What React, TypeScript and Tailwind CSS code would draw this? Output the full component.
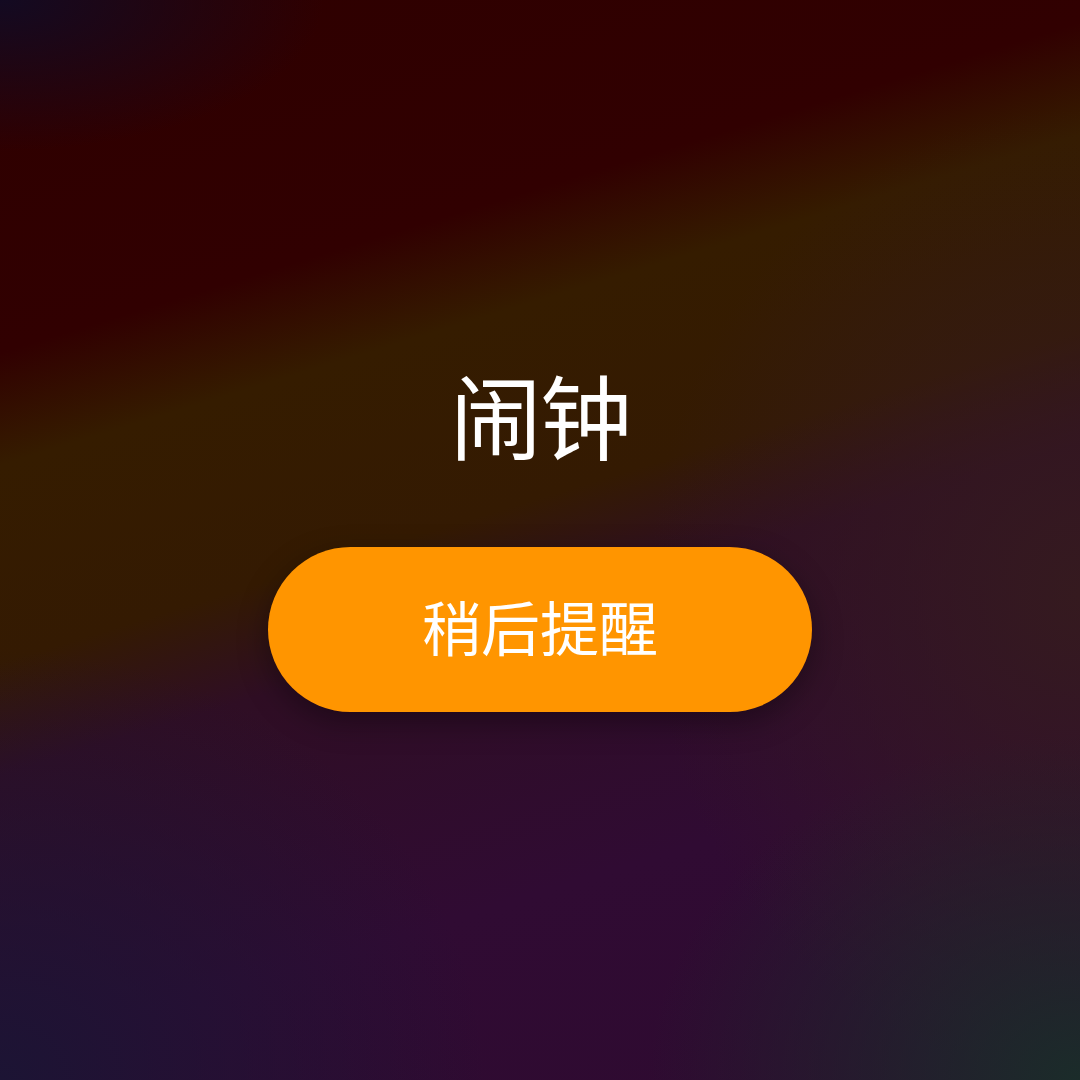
import React from 'react';

export default function App(): React.ReactNode {
  return (
    <div
      className="relative w-[1080px] h-[1080px] overflow-hidden flex flex-col items-center pt-[367px] font-['Noto_Sans_CJK_SC','Noto_Sans',sans-serif] bg-[radial-gradient(ellipse_30%_14%_at_0%_0%,#130a22_0%,transparent_100%),radial-gradient(ellipse_45%_40%_at_0%_100%,#1c1434_0%,transparent_100%),radial-gradient(ellipse_40%_32%_at_100%_100%,#1b2c2a_0%,transparent_100%),radial-gradient(ellipse_40%_45%_at_100%_55%,#351a1f_0%,transparent_100%),linear-gradient(163deg,#2e0000_0%,#310001_25%,#351c00_33%,#341a02_47%,#2f0e24_55%,#300b33_75%,#2e0a30_100%)]"
    >
      <h1 className="text-[92px] leading-none font-normal text-white tracking-[-2px]">闹钟</h1>
      <button
        type="button"
        className="mt-[88px] w-[544px] h-[165px] rounded-full bg-[#ff9500] text-white text-[59px] leading-none font-normal flex items-center justify-center pb-[8px] shadow-[0_10px_30px_rgba(0,0,0,0.35)]"
      >
        稍后提醒
      </button>
    </div>
  );
}
